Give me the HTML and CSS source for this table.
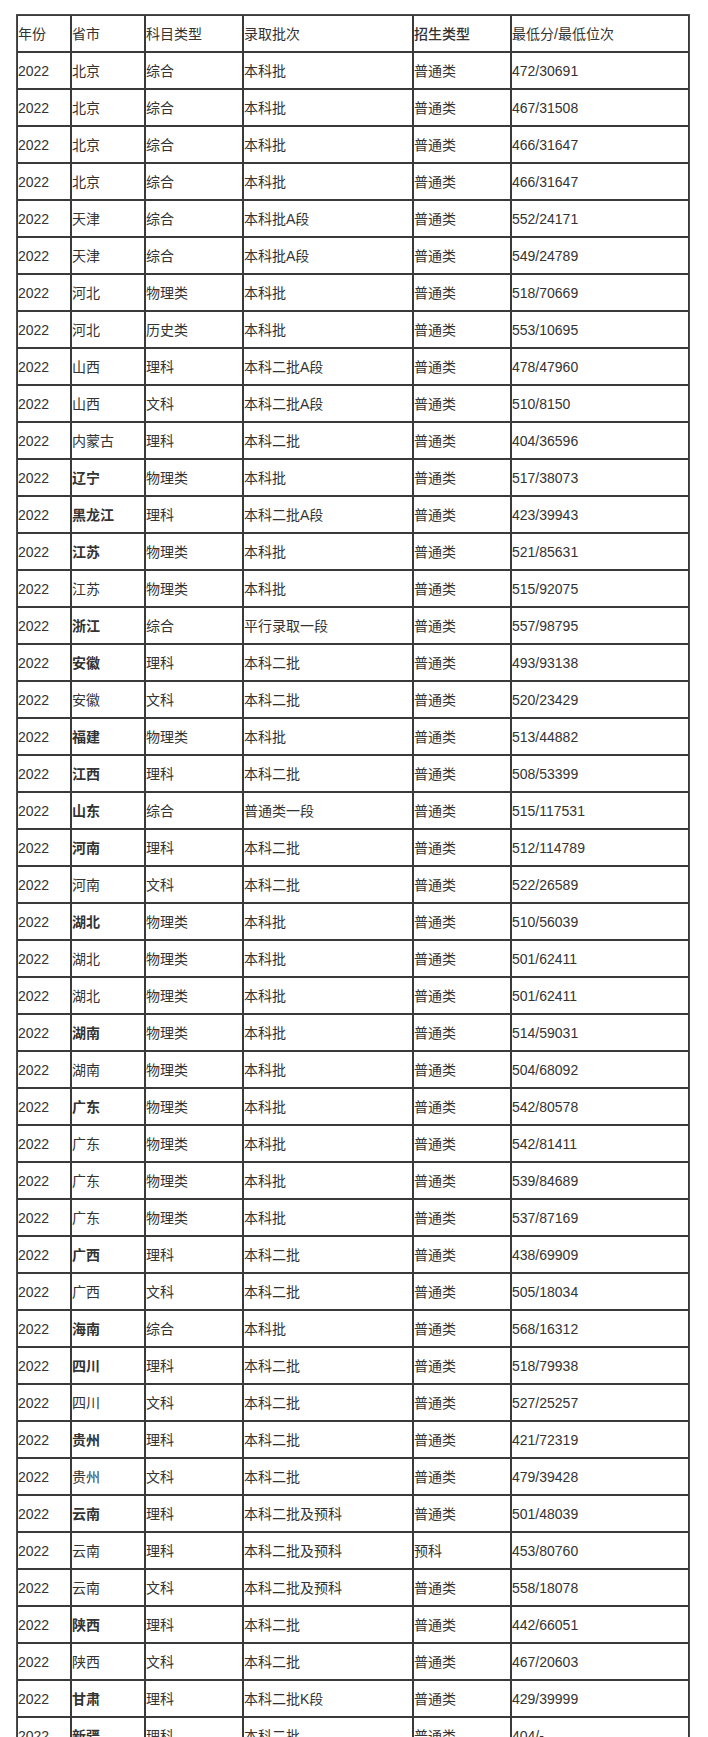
FILE: index.html
```html
<!DOCTYPE html>
<html lang="zh-CN">
<head>
<meta charset="utf-8">
<title>2022 录取分数</title>
<link rel="stylesheet" href="styles.css">
</head>
<body>
<div class="wrap">
<table class="score">
<tbody>
<tr><td class="c1">年份</td><td class="c2">省市</td><td class="c3">科目类型</td><td class="c4">录取批次</td><td class="c5 hd">招生类型</td><td class="c6">最低分/最低位次</td></tr>
<tr><td>2022</td><td>北京</td><td>综合</td><td>本科批</td><td>普通类</td><td>472/30691</td></tr>
<tr><td>2022</td><td>北京</td><td>综合</td><td>本科批</td><td>普通类</td><td>467/31508</td></tr>
<tr><td>2022</td><td>北京</td><td>综合</td><td>本科批</td><td>普通类</td><td>466/31647</td></tr>
<tr><td>2022</td><td>北京</td><td>综合</td><td>本科批</td><td>普通类</td><td>466/31647</td></tr>
<tr><td>2022</td><td>天津</td><td>综合</td><td>本科批A段</td><td>普通类</td><td>552/24171</td></tr>
<tr><td>2022</td><td>天津</td><td>综合</td><td>本科批A段</td><td>普通类</td><td>549/24789</td></tr>
<tr><td>2022</td><td>河北</td><td>物理类</td><td>本科批</td><td>普通类</td><td>518/70669</td></tr>
<tr><td>2022</td><td>河北</td><td>历史类</td><td>本科批</td><td>普通类</td><td>553/10695</td></tr>
<tr><td>2022</td><td>山西</td><td>理科</td><td>本科二批A段</td><td>普通类</td><td>478/47960</td></tr>
<tr><td>2022</td><td>山西</td><td>文科</td><td>本科二批A段</td><td>普通类</td><td>510/8150</td></tr>
<tr><td>2022</td><td>内蒙古</td><td>理科</td><td>本科二批</td><td>普通类</td><td>404/36596</td></tr>
<tr><td>2022</td><td class="b">辽宁</td><td>物理类</td><td>本科批</td><td>普通类</td><td>517/38073</td></tr>
<tr><td>2022</td><td class="b">黑龙江</td><td>理科</td><td>本科二批A段</td><td>普通类</td><td>423/39943</td></tr>
<tr><td>2022</td><td class="b">江苏</td><td>物理类</td><td>本科批</td><td>普通类</td><td>521/85631</td></tr>
<tr><td>2022</td><td>江苏</td><td>物理类</td><td>本科批</td><td>普通类</td><td>515/92075</td></tr>
<tr><td>2022</td><td class="b">浙江</td><td>综合</td><td>平行录取一段</td><td>普通类</td><td>557/98795</td></tr>
<tr><td>2022</td><td class="b">安徽</td><td>理科</td><td>本科二批</td><td>普通类</td><td>493/93138</td></tr>
<tr><td>2022</td><td>安徽</td><td>文科</td><td>本科二批</td><td>普通类</td><td>520/23429</td></tr>
<tr><td>2022</td><td class="b">福建</td><td>物理类</td><td>本科批</td><td>普通类</td><td>513/44882</td></tr>
<tr><td>2022</td><td class="b">江西</td><td>理科</td><td>本科二批</td><td>普通类</td><td>508/53399</td></tr>
<tr><td>2022</td><td class="b">山东</td><td>综合</td><td>普通类一段</td><td>普通类</td><td>515/117531</td></tr>
<tr><td>2022</td><td class="b">河南</td><td>理科</td><td>本科二批</td><td>普通类</td><td>512/114789</td></tr>
<tr><td>2022</td><td>河南</td><td>文科</td><td>本科二批</td><td>普通类</td><td>522/26589</td></tr>
<tr><td>2022</td><td class="b">湖北</td><td>物理类</td><td>本科批</td><td>普通类</td><td>510/56039</td></tr>
<tr><td>2022</td><td>湖北</td><td>物理类</td><td>本科批</td><td>普通类</td><td>501/62411</td></tr>
<tr><td>2022</td><td>湖北</td><td>物理类</td><td>本科批</td><td>普通类</td><td>501/62411</td></tr>
<tr><td>2022</td><td class="b">湖南</td><td>物理类</td><td>本科批</td><td>普通类</td><td>514/59031</td></tr>
<tr><td>2022</td><td>湖南</td><td>物理类</td><td>本科批</td><td>普通类</td><td>504/68092</td></tr>
<tr><td>2022</td><td class="b">广东</td><td>物理类</td><td>本科批</td><td>普通类</td><td>542/80578</td></tr>
<tr><td>2022</td><td>广东</td><td>物理类</td><td>本科批</td><td>普通类</td><td>542/81411</td></tr>
<tr><td>2022</td><td>广东</td><td>物理类</td><td>本科批</td><td>普通类</td><td>539/84689</td></tr>
<tr><td>2022</td><td>广东</td><td>物理类</td><td>本科批</td><td>普通类</td><td>537/87169</td></tr>
<tr><td>2022</td><td class="b">广西</td><td>理科</td><td>本科二批</td><td>普通类</td><td>438/69909</td></tr>
<tr><td>2022</td><td>广西</td><td>文科</td><td>本科二批</td><td>普通类</td><td>505/18034</td></tr>
<tr><td>2022</td><td class="b">海南</td><td>综合</td><td>本科批</td><td>普通类</td><td>568/16312</td></tr>
<tr><td>2022</td><td class="b">四川</td><td>理科</td><td>本科二批</td><td>普通类</td><td>518/79938</td></tr>
<tr><td>2022</td><td>四川</td><td>文科</td><td>本科二批</td><td>普通类</td><td>527/25257</td></tr>
<tr><td>2022</td><td class="b">贵州</td><td>理科</td><td>本科二批</td><td>普通类</td><td>421/72319</td></tr>
<tr><td>2022</td><td>贵州</td><td>文科</td><td>本科二批</td><td>普通类</td><td>479/39428</td></tr>
<tr><td>2022</td><td class="b">云南</td><td>理科</td><td>本科二批及预科</td><td>普通类</td><td>501/48039</td></tr>
<tr><td>2022</td><td>云南</td><td>理科</td><td>本科二批及预科</td><td>预科</td><td>453/80760</td></tr>
<tr><td>2022</td><td>云南</td><td>文科</td><td>本科二批及预科</td><td>普通类</td><td>558/18078</td></tr>
<tr><td>2022</td><td class="b">陕西</td><td>理科</td><td>本科二批</td><td>普通类</td><td>442/66051</td></tr>
<tr><td>2022</td><td>陕西</td><td>文科</td><td>本科二批</td><td>普通类</td><td>467/20603</td></tr>
<tr><td>2022</td><td class="b">甘肃</td><td>理科</td><td>本科二批K段</td><td>普通类</td><td>429/39999</td></tr>
<tr><td>2022</td><td class="b">新疆</td><td>理科</td><td>本科二批</td><td>普通类</td><td>404/-</td></tr>
</tbody>
</table>
</div>
</body>
</html>
```

FILE: styles.css
```css
html, body {
  margin: 0;
  padding: 0;
  background: #ffffff;
}

.wrap {
  padding: 14px 18px 0 16px;
}

.score {
  box-sizing: border-box;
  width: 674px;
  table-layout: fixed;
  border-collapse: separate;
  border-spacing: 0;
  border: 1px solid #4d4d4d;
  font-family: "Liberation Sans", "Noto Sans CJK SC", sans-serif;
  font-size: 14px;
  line-height: 20px;
  color: #333333;
}

.score td {
  border: 1px solid #3a3a3a;
  padding: 0;
  height: 35px;
  vertical-align: middle;
  text-align: left;
  white-space: nowrap;
}

.score td.c1 { width: 52px; }
.score td.c2 { width: 72px; }
.score td.c3 { width: 96px; }
.score td.c4 { width: 168px; }
.score td.c5 { width: 96px; }
.score td.c6 { width: 176px; }

.score td.hd { font-weight: 500; }
.score td.b { font-weight: bold; }
```
